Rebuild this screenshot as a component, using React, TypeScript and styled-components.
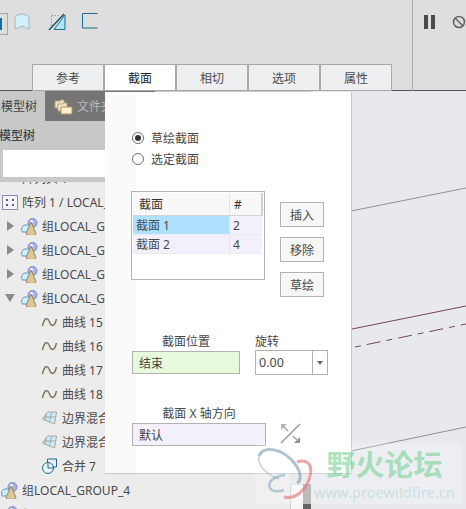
import React from "react";
import styled, { createGlobalStyle } from "styled-components";

const Global = createGlobalStyle`
  html, body { margin: 0; padding: 0; overflow: hidden; }
  body { font-family: "Noto Sans", "Noto Sans CJK SC", sans-serif; font-size: 12px; color: #474747; }
  * { box-sizing: border-box; }
`;

const Page = styled.div`
  position: relative;
  width: 466px;
  height: 509px;
  overflow: hidden;
  display: flex;
  flex-direction: column;
  background: #dedede;
`;

const Toolbar = styled.header`
  flex: none;
  height: 91px;
  display: flex;
  border-bottom: 1px solid #555;
  background: #dedede;
`;
const ToolMain = styled.div`
  width: 413px;
  margin-bottom: -1px;
  border-right: 1px solid #a9a9a9;
  display: flex;
  flex-direction: column;
`;
const IconRow = styled.div`
  display: flex;
  align-items: flex-start;
  padding-top: 13px;
`;
const ToolButton = styled.div`
  width: 8px;
  height: 22px;
  margin-right: 6px;
  border: 1px solid #a9a9a9;
  border-left: 0;
  display: flex;
  align-items: center;
  &::before { content: ""; width: 2px; height: 12px; background: #1a6d94; margin-left: 0; }
`;
const ToolIcon = styled.svg<{ $gap: number }>`
  display: block;
  flex: none;
  margin-right: ${(p) => p.$gap}px;
`;
const TabStrip = styled.nav`
  margin: auto 0 0 32px;
  width: 360px;
  height: 27px;
  display: flex;
  gap: 2px;
  padding: 1px;
  background: #a8a8a8;
`;
const Tab = styled.div<{ $active?: boolean }>`
  width: 70px;
  display: flex;
  align-items: center;
  justify-content: center;
  background: ${(p) => (p.$active ? "#fff" : "#eeeff1")};
  color: ${(p) => (p.$active ? "#222" : "#4b4b4b")};
  font-size: 12px;
`;
const ToolAside = styled.div`
  flex: 1;
  display: flex;
  align-items: flex-start;
  padding: 15px 0 0 11px;
  gap: 17px;
`;
const Pause = styled.div`
  display: flex;
  gap: 3px;
  &::before, &::after { content: ""; width: 4px; height: 14px; background: #4a4a4a; }
`;

const Body = styled.main`
  position: relative;
  flex: 1;
  display: flex;
  min-height: 0;
`;

const LeftPanel = styled.section`
  flex: none;
  width: 311px;
  display: flex;
  flex-direction: column;
  background: #ececec;
  position: relative;
`;
const PanelTabs = styled.div`
  flex: none;
  height: 30px;
  display: flex;
  background: #c8c8c8;
`;
const PanelTab = styled.div<{ $active?: boolean }>`
  display: flex;
  align-items: center;
  gap: 4px;
  background: ${(p) => (p.$active ? "#c8c8c8" : "#757575")};
  color: ${(p) => (p.$active ? "#444" : "#b9b9b9")};
  width: ${(p) => (p.$active ? "45px" : "110px")};
  padding-left: ${(p) => (p.$active ? "1px" : "9px")};
  font-size: 12px;
  white-space: nowrap;
`;
const PanelHead = styled.div`
  flex: none;
  height: 61px;
  background: #c8c8c8;
  padding: 6px 0 0 0;
`;
const PanelTitle = styled.div`
  height: 17px;
  line-height: 17px;
  font-size: 12px;
  color: #444;
  font-weight: 500;
  margin-left: -1px;
`;
const SearchBox = styled.div`
  margin: 6px 0 0 3px;
  width: 105px;
  height: 27px;
  background: #fff;
`;
const TreeWrap = styled.div`
  flex: 1;
  min-height: 0;
  display: flex;
  overflow: hidden;
`;
const Tree = styled.ul`
  flex: 1;
  list-style: none;
  margin: -16px 0 0;
  padding: 0;
`;
const Row = styled.li<{ $indent: number }>`
  height: 24px;
  display: flex;
  align-items: center;
  padding-left: ${(p) => p.$indent}px;
  white-space: nowrap;
  font-size: 12px;
  color: #4a4a4a;
`;
const RowIcon = styled.svg`
  display: block;
  flex: none;
  margin-right: 4px;
`;
const Arrow = styled.span<{ $open?: boolean }>`
  flex: none;
  width: 0;
  height: 0;
  margin-right: ${(p) => (p.$open ? "6px" : "7px")};
  ${(p) =>
    p.$open
      ? `border-left: 5px solid transparent; border-right: 5px solid transparent; border-top: 8px solid #8a8a8a; margin-left: -2px;`
      : `border-top: 5px solid transparent; border-bottom: 5px solid transparent; border-left: 7px solid #8a8a8a;`}
`;
const Scrollbar = styled.div`
  flex: none;
  width: 21px;
  display: flex;
  background: #e6e6e6;
`;
const ScrollTrack = styled.div`
  width: 13px;
  margin-top: 302px;
  background: #f6f6f6;
  border-top: 1px solid #ddd;
  border-left: 1px solid #ccc;
`;
const ScrollEdge = styled.div`
  width: 8px;
  margin-top: 302px;
  background: linear-gradient(#a8a8a8 80%, #666 80%);
`;

const Dialog = styled.section`
  position: absolute;
  left: 105px;
  top: 1px;
  width: 247px;
  height: 382px;
  background: linear-gradient(90deg, #fafafa 31px, #fff 31px);
  border-right: 1px solid #c6c7cc;
  border-bottom: 1px solid #c6c7cc;
  padding: 35px 0 0 27px;
  display: flex;
  flex-direction: column;
`;
const RadioRow = styled.label`
  height: 21px;
  display: flex;
  align-items: center;
  gap: 7px;
  font-size: 12px;
`;
const Radio = styled.span<{ $on?: boolean }>`
  width: 12px;
  height: 12px;
  border-radius: 50%;
  border: 1px solid #6f6f6f;
  background: #fff;
  display: flex;
  align-items: center;
  justify-content: center;
  &::after {
    content: "";
    width: 6px;
    height: 6px;
    border-radius: 50%;
    background: ${(p) => (p.$on ? "#333" : "transparent")};
  }
`;
const TableRow = styled.div`
  margin: 22px 0 0 -1px;
  display: flex;
  gap: 15px;
  align-items: flex-start;
`;
const SectionTable = styled.div`
  width: 134px;
  height: 89px;
  border: 1px solid #b2b2b2;
  padding: 1px 1px 0 1px;
  background: #fff;
  display: flex;
  flex-direction: column;
`;
const TableLine = styled.div<{ $kind: "head" | "sel" | "plain" }>`
  display: grid;
  grid-template-columns: 96px 1fr;
  height: ${(p) => (p.$kind === "head" ? "23px" : "19px")};
  background: ${(p) => (p.$kind === "head" ? "#f8f8f8" : "#f3f0fc")};
  border-bottom: 1px solid ${(p) => (p.$kind === "head" ? "#d4d4d4" : "#ebebf0")};
  border-right: ${(p) => (p.$kind === "head" ? "2px solid #d0d0d0" : "1px solid #fff")};
  font-size: 12px;
  color: ${(p) => (p.$kind === "head" ? "#333" : "#4a4a4a")};
`;
const Cell = styled.div<{ $sel?: boolean; $pad: number }>`
  display: flex;
  align-items: center;
  padding-left: ${(p) => p.$pad}px;
  background: ${(p) => (p.$sel ? "#aee0ff" : "transparent")};
  & + & { border-left: 1px solid #e2e2e2; }
`;
const ButtonCol = styled.div`
  display: flex;
  flex-direction: column;
  gap: 10px;
  margin-top: 11px;
`;
const Button = styled.button`
  width: 44px;
  height: 25px;
  padding: 0;
  border: 1px solid #b2b2b2;
  background: #f7f7f7;
  color: #474747;
  font: inherit;
  font-size: 12px;
`;
const FieldRow = styled.div`
  display: flex;
  margin-top: 37px;
  gap: 15px;
`;
const Field = styled.div<{ $w: number; $lift?: boolean }>`
  width: ${(p) => p.$w}px;
  display: flex;
  flex-direction: column;
  gap: ${(p) => (p.$lift ? "0" : "1px")};
`;
const FieldLabel = styled.div<{ $left?: boolean }>`
  height: 16px;
  line-height: 16px;
  font-size: 12px;
  color: #474747;
  text-align: ${(p) => (p.$left ? "left" : "center")};
  white-space: nowrap;
`;
const ValueBox = styled.div<{ $bg: string }>`
  height: 23px;
  border: 1px solid #b2b2b2;
  background: ${(p) => p.$bg};
  display: flex;
  align-items: center;
  padding-left: 6px;
  font-size: 12px;
  color: #444;
`;
const Select = styled.div`
  height: 25px;
  border: 1px solid #b2b2b2;
  background: #fff;
  display: flex;
  font-size: 12.5px;
`;
const SelectValue = styled.div`
  flex: 1;
  display: flex;
  align-items: center;
  padding-left: 3px;
`;
const SelectArrow = styled.div`
  width: 15px;
  border-left: 1px solid #b2b2b2;
  display: flex;
  align-items: center;
  justify-content: center;
  &::after {
    content: "";
    border-left: 3.5px solid transparent;
    border-right: 3.5px solid transparent;
    border-top: 4px solid #666;
  }
`;
const AxisRow = styled.div`
  display: flex;
  align-items: flex-end;
  gap: 14px;
  margin-top: 31px;
`;
const FlipIcon = styled.svg`
  display: block;
  margin-bottom: 2px;
`;

const Viewport = styled.svg`
  flex: 1;
  display: block;
  min-width: 0;
  height: 100%;
  background: #e8e9ed;
`;

const Watermark = styled.aside`
  position: absolute;
  left: 255px;
  top: 443px;
  width: 206px;
  height: 61px;
  display: flex;
  background: rgba(255, 255, 255, 0.22);
  pointer-events: none;
`;
const WaterLogo = styled.svg`
  flex: none;
  display: block;
  margin-top: 3px;
`;
const WaterText = styled.div`
  flex: 1;
  display: flex;
  flex-direction: column;
  align-items: center;
  padding-right: 5px;
`;
const WaterTitle = styled.div`
  height: 34px;
  margin-top: 5px;
  line-height: 34px;
  font-size: 29px;
  font-weight: 700;
  color: rgba(120, 210, 150, 0.62);
  white-space: nowrap;
`;
const WaterUrl = styled.div`
  font-family: "Noto Sans", sans-serif;
  font-size: 14.5px;
  line-height: 20px;
  letter-spacing: 0.1px;
  color: rgba(150, 205, 205, 0.45);
  white-space: nowrap;
`;

const FolderIcon = () => (
  <svg width="19" height="17" viewBox="0 0 19 17">
    <path d="M1 3h5l1-1h3v8H1z" fill="#efe2c4" stroke="#b9a47c" />
    <path d="M4 6h5l1-1h3v8H4z" fill="#f3e6c8" stroke="#b9a47c" />
    <path d="M7 9h11v7H7z" fill="#fbf0d2" stroke="#b0955f" />
  </svg>
);

const GroupIcon = () => (
  <RowIcon width="17" height="17" viewBox="0 0 17 17">
    <path d="M0.5 9.5 3 7h6v7H1z" fill="#cfeefc" stroke="#5f9fc0" />
    <circle cx="11.5" cy="5" r="4.5" fill="#a9b0e6" stroke="#7f86c8" />
    <circle cx="10.5" cy="3.5" r="1.6" fill="#eef0ff" />
    <path d="M10 4 15 15.5a5 2 0 0 1-10 0z" fill="#dcc79b" stroke="#9c8558" />
  </RowIcon>
);

const CurveIcon = () => (
  <RowIcon width="17" height="14" viewBox="0 0 16 14">
    <path d="M1 11C3 2 6 2 8 7s5 5 7-3" fill="none" stroke="#86704a" strokeWidth="1.4" />
  </RowIcon>
);

const BlendIcon = () => (
  <RowIcon width="17" height="16" viewBox="0 0 16 16">
    <path d="M1 9 6 2h9l-2 12-5-2z" fill="#cfeefa" stroke="#a7a7a7" />
    <path d="M5 3 4 11M10 2 8 12M2 7h12" stroke="#8f9aa0" fill="none" strokeWidth=".8" />
  </RowIcon>
);

const MergeIcon = () => (
  <RowIcon width="17" height="16" viewBox="0 0 16 16">
    <path d="M6 1h9v8H6z" fill="none" stroke="#1a6d94" />
    <circle cx="6.5" cy="10" r="5.5" fill="#eaf4f8" stroke="#1a6d94" />
    <path d="M6.5 10V5M6.5 10H12" stroke="#1a6d94" fill="none" />
  </RowIcon>
);

const PatternIcon = () => (
  <RowIcon width="16" height="15" viewBox="0 0 16 15">
    <rect x=".5" y=".5" width="15" height="14" fill="#f7f5fc" stroke="#8e8bb8" />
    <rect x="4" y="4" width="2" height="2" fill="#5c5a92" />
    <rect x="10" y="4" width="2" height="2" fill="#5c5a92" />
    <rect x="4" y="9" width="2" height="2" fill="#5c5a92" />
    <rect x="10" y="9" width="2" height="2" fill="#5c5a92" />
  </RowIcon>
);

const tabs = ["参考", "截面", "相切", "选项", "属性"];
const sections = [
  { name: "截面 1", count: 2, selected: true },
  { name: "截面 2", count: 4, selected: false },
];
const groups = [false, false, false, true];
const curves = ["曲线 15", "曲线 16", "曲线 17", "曲线 18"];

export default function App() {
  return (
    <Page>
      <Global />
      <Toolbar>
        <ToolMain>
          <IconRow>
            <ToolButton />
            <ToolIcon $gap={18} width="16" height="17" viewBox="0 0 16 17">
              <path d="M1 4C5 0 11 0 15 4v12l-3-1C10 13 6 13 4 15l-3 1z" fill="#d2f0fb" stroke="#aab4b8" />
            </ToolIcon>
            <ToolIcon $gap={16} width="18" height="18" viewBox="0 0 18 18">
              <path d="M3.5 2.5h7" fill="none" stroke="#999" strokeDasharray="1.5 1.5" />
              <path d="M3.5 2.5v11" fill="none" stroke="#999" strokeDasharray="1.5 1.5" />
              <path d="M17 16.5V2L6 16.5z" fill="#aee4fa" stroke="#1a6d94" />
              <path d="M16 1 1 17" fill="none" stroke="#14546f" strokeWidth="1.4" />
            </ToolIcon>
            <ToolIcon $gap={0} width="16" height="16" viewBox="0 0 16 16">
              <path d="M15.5 .5H.5v14.5h15" fill="none" stroke="#1a6d94" />
            </ToolIcon>
          </IconRow>
          <TabStrip>
            {tabs.map((t) => (
              <Tab key={t} $active={t === "截面"}>{t}</Tab>
            ))}
          </TabStrip>
        </ToolMain>
        <ToolAside>
          <Pause />
          <svg width="14" height="14" viewBox="0 0 14 14" style={{ flex: "none" }}>
            <circle cx="7" cy="7" r="5.5" fill="none" stroke="#666" strokeWidth="1.6" />
            <path d="M3 3l8 8" stroke="#666" strokeWidth="1.6" />
          </svg>
        </ToolAside>
      </Toolbar>
      <Body>
        <LeftPanel>
          <PanelTabs>
            <PanelTab $active>模型树</PanelTab>
            <PanelTab><FolderIcon />文件夹浏览器</PanelTab>
          </PanelTabs>
          <PanelHead>
            <PanelTitle>模型树</PanelTitle>
            <SearchBox />
          </PanelHead>
          <TreeWrap>
            <Tree>
              <Row $indent={22}>阵列头 1</Row>
              <Row $indent={2}><PatternIcon />阵列 1 / LOCAL_G</Row>
              {groups.map((open, i) => (
                <Row key={i} $indent={7}>
                  <Arrow $open={open} />
                  <GroupIcon />组LOCAL_GR
                </Row>
              ))}
              {curves.map((c) => (
                <Row key={c} $indent={41}><CurveIcon />{c}</Row>
              ))}
              <Row $indent={41}><BlendIcon />边界混合 1</Row>
              <Row $indent={41}><BlendIcon />边界混合 2</Row>
              <Row $indent={41}><MergeIcon />合并 7</Row>
              <Row $indent={1}><GroupIcon />组LOCAL_GROUP_4</Row>
              <Row $indent={1}><GroupIcon />组LOCAL_GROUP_5</Row>
            </Tree>
            <Scrollbar>
              <ScrollTrack />
              <ScrollEdge />
            </Scrollbar>
          </TreeWrap>
        </LeftPanel>
        <Viewport viewBox="311 91 155 418">
          <path d="M351 211 466 188" stroke="#8f8f9d" strokeWidth="1" fill="none" />
          <path d="M351 451 466 427" stroke="#8f8f9d" strokeWidth="1" fill="none" />
          <path d="M352 329 466 306" stroke="#7a4654" strokeWidth="1" fill="none" />
          <path d="M355 347 466 324" stroke="#7a4654" strokeWidth="1" fill="none" strokeDasharray="6 6 14 6" />
        </Viewport>
        <Dialog>
          <RadioRow><Radio $on />草绘截面</RadioRow>
          <RadioRow><Radio />选定截面</RadioRow>
          <TableRow>
            <SectionTable>
              <TableLine $kind="head">
                <Cell $pad={6}>截面</Cell>
                <Cell $pad={4}>#</Cell>
              </TableLine>
              {sections.map((s) => (
                <TableLine key={s.name} $kind={s.selected ? "sel" : "plain"}>
                  <Cell $pad={3} $sel={s.selected}>{s.name}</Cell>
                  <Cell $pad={3}>{s.count}</Cell>
                </TableLine>
              ))}
            </SectionTable>
            <ButtonCol>
              <Button>插入</Button>
              <Button>移除</Button>
              <Button>草绘</Button>
            </ButtonCol>
          </TableRow>
          <FieldRow>
            <Field $w={108}>
              <FieldLabel>截面位置</FieldLabel>
              <ValueBox $bg="#e8fadc">结束</ValueBox>
            </Field>
            <Field $w={73} $lift>
              <FieldLabel $left>旋转</FieldLabel>
              <Select>
                <SelectValue>0.00</SelectValue>
                <SelectArrow />
              </Select>
            </Field>
          </FieldRow>
          <AxisRow>
            <Field $w={134}>
              <FieldLabel>截面 X 轴方向</FieldLabel>
              <ValueBox $bg="#f3f0fc">默认</ValueBox>
            </Field>
            <FlipIcon width="21" height="21" viewBox="0 0 21 21">
              <path d="M1 20 20 1" stroke="#9a9a9a" strokeWidth="1.5" />
              <path d="M1 1h6L1 7z" fill="#b5b5b5" />
              <path d="M20 20h-6l6-6z" fill="#8f8f8f" />
              <path d="M3 3l5 5M18 18l-5-5" stroke="#a5a5a5" strokeWidth="1.5" />
            </FlipIcon>
          </AxisRow>
        </Dialog>
      </Body>
      <Watermark>
        <WaterLogo width="58" height="56" viewBox="0 0 58 56">
          <path d="M4 10C8 -1 28 2 40 18c6 8 7 16 2 19" fill="none" stroke="rgba(120,155,180,.6)" strokeWidth="3" />
          <path d="M4 10c-2 8 6 18 20 23" fill="none" stroke="rgba(120,155,180,.45)" strokeWidth="1.5" />
          <path d="M30 29C20 30 12 35 15 42c2 4 9 4 14 2" fill="none" stroke="rgba(120,155,180,.5)" strokeWidth="2.5" />
          <path d="M42 16c10-3 16 2 13 14-3 13-14 24-26 21" fill="none" stroke="rgba(225,120,125,.65)" strokeWidth="3" />
        </WaterLogo>
        <WaterText>
          <WaterTitle>野火论坛</WaterTitle>
          <WaterUrl>www.proewildfire.cn</WaterUrl>
        </WaterText>
      </Watermark>
    </Page>
  );
}
